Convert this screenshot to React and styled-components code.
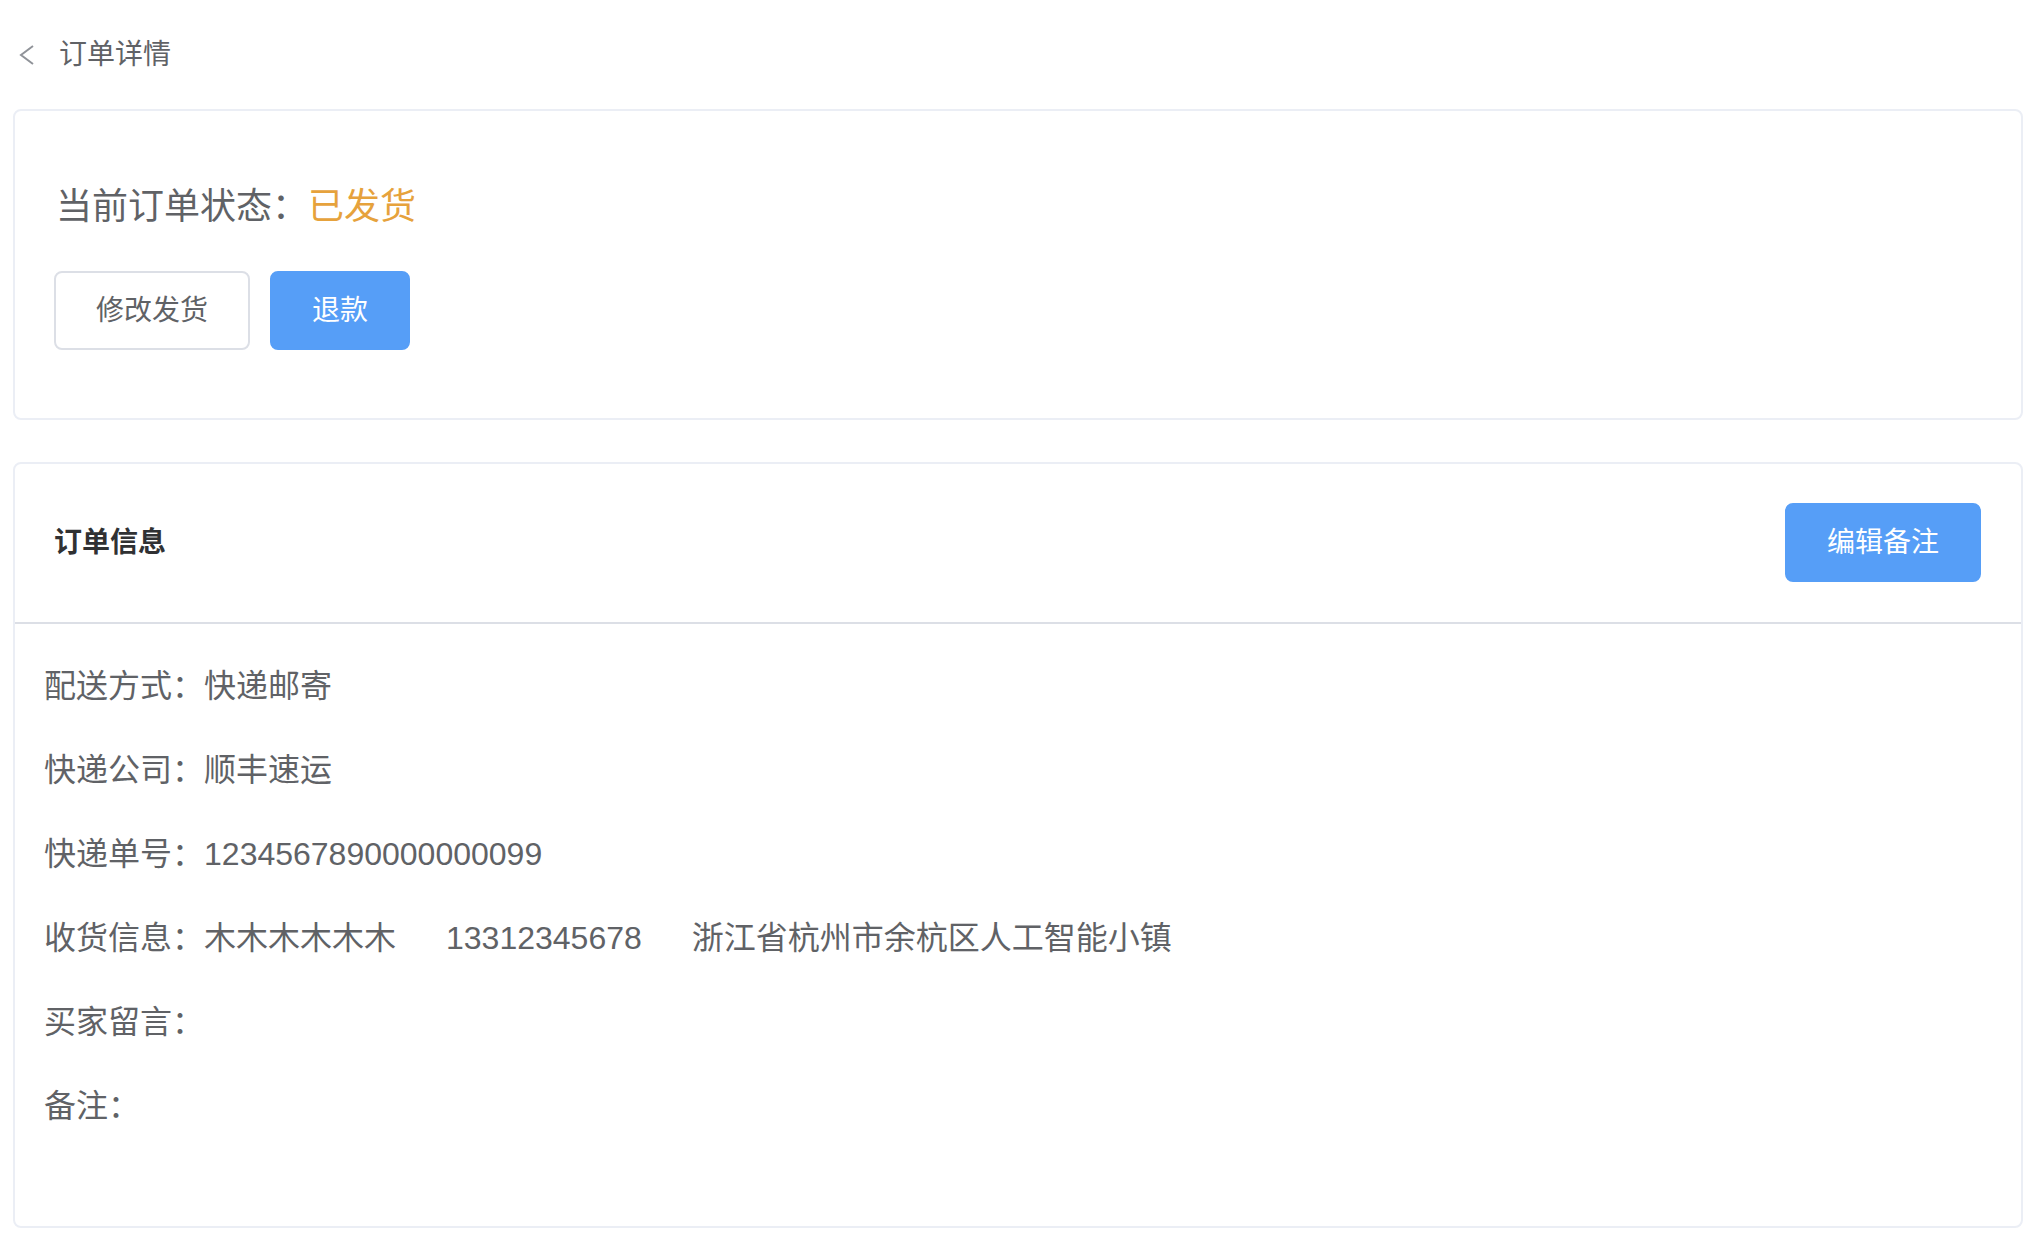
import styled, { createGlobalStyle } from 'styled-components';

const GlobalStyle = createGlobalStyle`
  html, body {
    margin: 0;
    padding: 0;
    background: #ffffff;
  }
  body {
    font-family: "Liberation Sans", "Noto Sans CJK SC", sans-serif;
    color: #606266;
  }
  * {
    box-sizing: border-box;
  }
`;

const Page = styled.div`
  padding: 0 5px 0 13px;
`;

const TopBar = styled.div`
  display: flex;
  align-items: center;
  height: 109px;
  padding-left: 6px;
  gap: 24px;
`;

const BackIcon = styled.svg`
  width: 16px;
  height: 22px;
  color: #909399;
`;

const PageTitle = styled.span`
  font-size: 28px;
  color: #606266;
  line-height: 1;
`;

const Card = styled.div`
  background: #fff;
  border: 2px solid #ebeef5;
  border-radius: 8px;
  margin-bottom: ${(p) => p.$gap || 0}px;
  overflow: hidden;
`;

const StatusBody = styled.div`
  padding: 69px 39px 68px;
`;

const StatusLine = styled.div`
  font-size: 36px;
  line-height: 54px;
  color: #606266;
  margin-left: 2px;
`;

const StatusValue = styled.span`
  color: #e6a23c;
`;

const ButtonRow = styled.div`
  display: flex;
  gap: 20px;
  margin-top: 37px;
`;

const Button = styled.button`
  font-family: inherit;
  font-size: 28px;
  line-height: 1;
  height: 79px;
  padding: 0 40px;
  border-radius: 8px;
  cursor: pointer;
  border: 2px solid ${(p) => (p.$primary ? '#569ef7' : '#dcdfe6')};
  background: ${(p) => (p.$primary ? '#569ef7' : '#ffffff')};
  color: ${(p) => (p.$primary ? '#ffffff' : '#606266')};
  white-space: nowrap;
`;

const CardHeader = styled.div`
  display: flex;
  align-items: center;
  justify-content: space-between;
  padding: 39px 40px 40px 39px;
  border-bottom: 2px solid #dcdfe6;
`;

const CardTitle = styled.span`
  font-size: 28px;
  font-weight: 700;
  color: #303133;
  margin-bottom: 5px;
`;

const InfoBody = styled.div`
  display: flex;
  flex-direction: column;
  gap: 40px;
  padding: 40px 29px 98px;
`;

const InfoRow = styled.div`
  font-size: 32px;
  line-height: 44px;
  color: #606266;
  white-space: nowrap;
`;

const Gap = styled.span`
  display: inline-block;
  width: 50px;
`;

const rows = [
  ['配送方式', '快递邮寄'],
  ['快递公司', '顺丰速运'],
  ['快递单号', '1234567890000000099'],
];

export default function App() {
  return (
    <Page>
      <GlobalStyle />
      <TopBar>
        <BackIcon viewBox="0 0 16 22" fill="none">
          <polyline points="14,2 2,11 14,20" stroke="currentColor" strokeWidth="2" />
        </BackIcon>
        <PageTitle>订单详情</PageTitle>
      </TopBar>

      <Card $gap={42}>
        <StatusBody>
          <StatusLine>
            当前订单状态：<StatusValue>已发货</StatusValue>
          </StatusLine>
          <ButtonRow>
            <Button>修改发货</Button>
            <Button $primary>退款</Button>
          </ButtonRow>
        </StatusBody>
      </Card>

      <Card>
        <CardHeader>
          <CardTitle>订单信息</CardTitle>
          <Button $primary>编辑备注</Button>
        </CardHeader>
        <InfoBody>
          {rows.map(([label, value]) => (
            <InfoRow key={label}>
              {label}：{value}
            </InfoRow>
          ))}
          <InfoRow>
            收货信息：木木木木木木<Gap />13312345678<Gap />浙江省杭州市余杭区人工智能小镇
          </InfoRow>
          <InfoRow>买家留言：</InfoRow>
          <InfoRow>备注：</InfoRow>
        </InfoBody>
      </Card>
    </Page>
  );
}
